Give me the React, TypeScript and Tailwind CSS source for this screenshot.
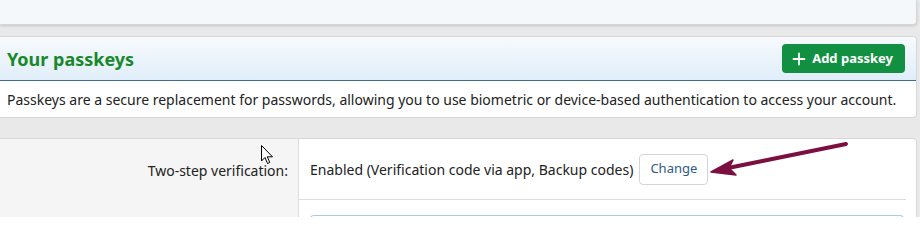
import React from 'react';

const App: React.FC = () => {
  return (
    <div className="relative w-[920px] h-[247px] overflow-hidden bg-[#e9e9e9] font-['Noto_Sans',sans-serif] text-[#222]">
      {/* Top panel (cut off) */}
      <div className="h-[25px] w-[917px] bg-[#f5f8fa] border-r border-b border-[#d6d6d6] rounded-br-[4px] shadow-[0_1px_3px_rgba(0,0,0,0.15)]" />

      {/* Passkeys */}
      <div className="mt-[11px] w-[917px] border-r border-y border-[#d6d6d6] rounded-r-[4px] overflow-hidden bg-white">
        <div className="h-[44px] flex items-center justify-between pl-[7px] pr-[11px] bg-gradient-to-b from-[#f7fafd] to-[#e0eef9] border-b border-[#3f6f90]">
          <h2 className="text-[18px] font-bold text-[#17892b] leading-none">Your passkeys</h2>
          <button className="flex items-center gap-[6px] h-[29px] pl-[10px] pr-[12px] bg-[#129042] text-white text-[13px] font-bold rounded-[4px]">
            <svg width="14" height="14" viewBox="0 0 14 14" className="stroke-white" strokeWidth="1.8" strokeLinecap="round">
              <path d="M7 1.5v11M1.5 7h11" />
            </svg>
            <span>Add passkey</span>
          </button>
        </div>
        <div className="h-[36px] flex items-center pl-[7px] text-[14px]">
          Passkeys are a secure replacement for passwords, allowing you to use biometric or device-based authentication to access your account.
        </div>
      </div>

      {/* Security settings */}
      <div className="mt-[20px] w-[917px] h-[79px] flex border-r border-t border-[#d6d6d6] rounded-tr-[4px] overflow-hidden">
        <div className="w-[298px] bg-[#f5f5f5] flex justify-end pr-[10px] pt-[21px] text-[14px]">
          Two-step verification:
        </div>
        <div className="flex-1 bg-white border-l border-[#dcdcdc] flex flex-col">
          <div className="shrink-0 h-[61px] flex items-center pl-[11px] gap-[6px] border-b border-[#dcdcdc] mr-[10px] text-[14px]">
            <span>Enabled (Verification code via app, Backup codes)</span>
            <button className="h-[31px] px-[10px] bg-white border border-[#d4d4d4] rounded-[4px] text-[13px] text-[#2f5a85]">Change</button>
          </div>
          <div className="shrink-0 mt-[15px] ml-[11px] mr-[12px] h-[10px] border-t border-l border-r border-[#a9cbe3] rounded-t-[4px]" />
        </div>
      </div>
      <div className="h-[30px] bg-white" />

      {/* Mouse cursor */}
      <svg className="absolute left-[261px] top-[145px]" width="13" height="20" viewBox="0 0 13 20">
        <path d="M0.5 0.5 L0.5 16 L4 12.5 L6.5 18.5 L8.8 17.5 L6.3 11.8 L11.5 11.8 Z" fill="white" stroke="black" strokeWidth="1" strokeLinejoin="round" />
      </svg>

      {/* Annotation arrow */}
      <svg className="absolute left-0 top-0 pointer-events-none" width="920" height="247">
        <path d="M846 144 L728 168" stroke="#7b1040" strokeWidth="4" strokeLinecap="round" fill="none" />
        <path d="M711 172 L733 160 L729 168 L736 175 Z" fill="#7b1040" stroke="#7b1040" strokeWidth="1.5" strokeLinejoin="round" />
      </svg>
    </div>
  );
};

export default App;
